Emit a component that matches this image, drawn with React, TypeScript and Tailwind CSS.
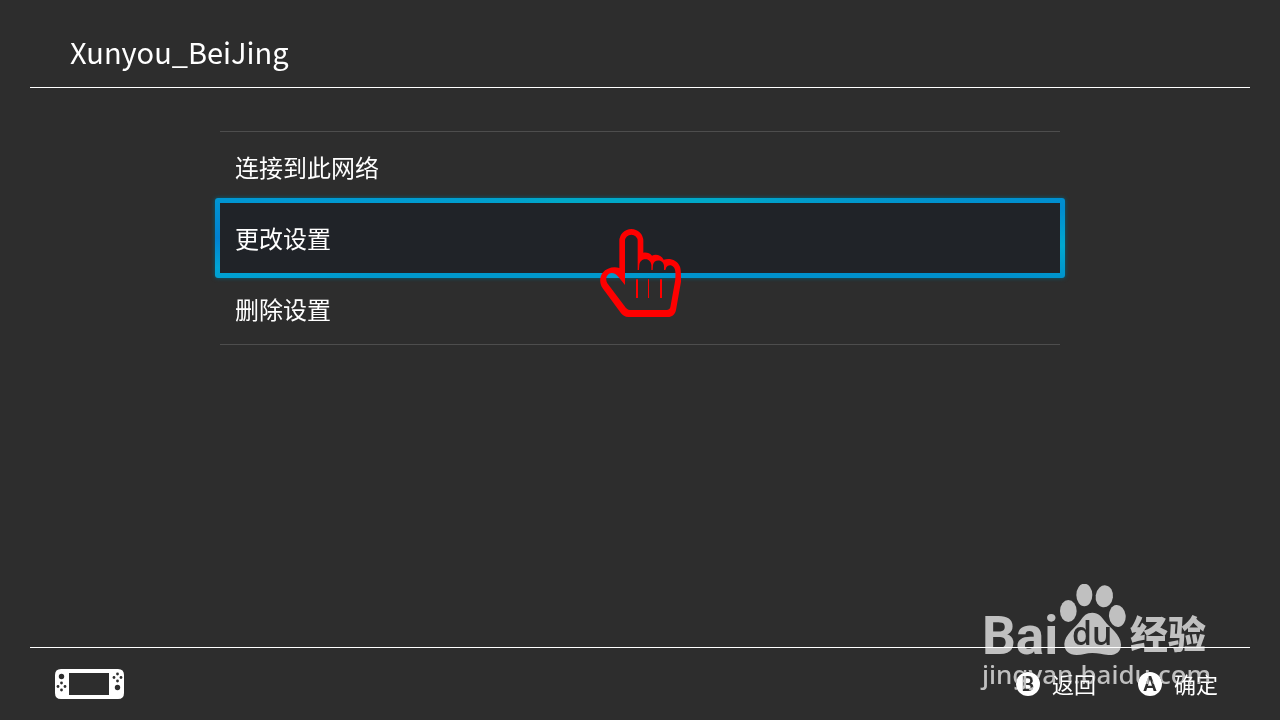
import { useState } from "react";

const menuItems = ["连接到此网络", "更改设置", "删除设置"];

const hints = [
  { key: "B", label: "返回" },
  { key: "A", label: "确定" },
];

function ConsoleIcon() {
  return (
    <svg className="h-[30px] w-[69px]" viewBox="0 0 69 30" aria-hidden="true">
      <path
        fill="#fff"
        fillRule="evenodd"
        d="M6 0H63Q69 0 69 6V24Q69 30 63 30H6Q0 30 0 24V6Q0 0 6 0ZM14 4V26H54V4Z"
      />
      <g fill="#2d2d2d">
        <circle cx="6.5" cy="7.5" r="2.7" />
        <circle cx="6.5" cy="14" r="1.4" />
        <circle cx="6.5" cy="21" r="1.4" />
        <circle cx="3" cy="17.5" r="1.4" />
        <circle cx="10" cy="17.5" r="1.4" />
        <circle cx="62.5" cy="18.5" r="2.7" />
        <circle cx="62.5" cy="5" r="1.4" />
        <circle cx="62.5" cy="12" r="1.4" />
        <circle cx="59" cy="8.5" r="1.4" />
        <circle cx="66" cy="8.5" r="1.4" />
      </g>
    </svg>
  );
}

function HandPointer() {
  return (
    <svg
      className="pointer-events-none absolute top-[25px] left-1/2 z-10 -ml-[41px] h-[90px] w-[84px]"
      viewBox="27 24 252 270"
      fill="#fe0000"
      aria-hidden="true"
    >
      <path
        fillRule="evenodd"
        d="M88 63A36 36 0 0 1 160 63V98C170 96 180 100 186 107C198 101 214 106 221 119C240 113 262 120 270 140C273 150 273 160 273 185L258 270C255 284 246 291 234 291H115C105 291 98 285 92 278L38 205C28 190 28 172 38 158C50 143 72 138 88 144Z
        M105 63A19 19 0 0 1 143 63V150H147L148 135C150 112 182 112 184 135V150H188L189 135C192 116 220 118 222 137V150H226L229 142C236 130 255 135 256 155C257 170 256 180 254 190L241 262C239 268 236 270 230 270H120C113 270 108 265 104 259L52 190C46 180 48 168 57 161C66 156 78 160 86 172L105 195Z"
      />
      <path d="M138 178h6v56h-6zM174 178h3v56h-3zM210 178h6v56h-6z" />
    </svg>
  );
}

function Paw() {
  return (
    <svg className="h-[72px] w-[66px]" viewBox="0 0 198 216" aria-hidden="true">
      <g fill="currentColor">
        <ellipse cx="25" cy="81" rx="25" ry="33" />
        <ellipse cx="73" cy="33" rx="24" ry="34" />
        <ellipse cx="133" cy="37" rx="26" ry="33" transform="rotate(8 133 37)" />
        <ellipse cx="172" cy="96" rx="25" ry="33" transform="rotate(-6 172 96)" />
        <path d="M97 86C115 86 125 98 134 111C148 131 182 150 183 182C183 203 168 214 145 213C128 212 115 207 97 207C79 207 68 213 50 213C27 213 13 200 13 180C14 151 47 132 62 109C71 95 80 86 97 86Z" />
      </g>
    </svg>
  );
}

function Watermark() {
  return (
    <div className="pointer-events-none absolute right-[70px] bottom-[30px] w-[228px] text-[#c0c0c0] mix-blend-lighten">
      <div className="flex h-[74px] items-end">
        <span className="w-[78px] font-['Roboto',sans-serif] text-[53px] leading-[44px] font-bold">
          Bai
        </span>
        <div className="relative h-[74px] w-[66px]">
          <Paw />
          <span className="absolute top-[31px] left-[12px] font-['Open_Sans',sans-serif] text-[32px] leading-[36px] font-semibold text-[#2d2d2d]">
            du
          </span>
        </div>
        <span className="ml-1 text-[38px] leading-[52px] font-black">经验</span>
      </div>
      <div className="font-['Noto_Sans',sans-serif] text-[26px] leading-[32px] font-medium">
        jingyan.baidu.com
      </div>
    </div>
  );
}

export default function App() {
  const [selected, setSelected] = useState(1);

  return (
    <div className="relative flex min-h-screen flex-col bg-[#2d2d2d] px-[30px] font-['Noto_Sans_CJK_SC',sans-serif] text-white">
      <header className="flex h-[88px] items-center border-b border-white px-10 pt-3.5">
        <h1 className="text-[29px] leading-[44px]">Xunyou_BeiJing</h1>
      </header>

      <main className="flex-1 pt-[43px]">
        <ul className="mx-auto flex w-full max-w-[840px] flex-col gap-px border-y border-[#4d4d4d]">
          {menuItems.map((item, index) => (
            <li key={item} className="relative">
              {/* glowing frame around the focused row */}
              {index === selected && (
                <div className="absolute -inset-[5px] rounded-[3px] bg-[conic-gradient(#00a8c8_0deg,#00a8c8_68deg,#0098cc_80deg,#008cd0_86deg,#00a8cf_91deg,#0090cc_96deg,#0098cc_180deg,#0098cc_262deg,#00a4d4_266deg,#0082d2_270deg,#0098d2_276deg,#00a8c8_294deg,#00a8c8_360deg)] shadow-[0_0_4px_#00607a]" />
              )}
              <button
                type="button"
                onClick={() => setSelected(index)}
                className={`relative flex h-[70px] w-full items-center px-[15px] text-left text-2xl outline-none ${
                  index === selected ? "bg-[#202328]" : ""
                }`}
              >
                {item}
              </button>
              {index === selected && <HandPointer />}
            </li>
          ))}
        </ul>
      </main>

      <footer className="flex h-[73px] items-center justify-between border-t border-white pr-8 pl-[25px]">
        <ConsoleIcon />
        <div className="flex gap-[42px]">
          {hints.map((hint) => (
            <button key={hint.key} type="button" className="flex items-center gap-3 text-[22px] leading-8">
              <span className="flex size-6 items-center justify-center rounded-full bg-white font-['Roboto',sans-serif] text-xl leading-6 font-semibold text-[#2d2d2d]">
                {hint.key}
              </span>
              <span className="pb-0.5">{hint.label}</span>
            </button>
          ))}
        </div>
      </footer>

      <Watermark />
    </div>
  );
}
